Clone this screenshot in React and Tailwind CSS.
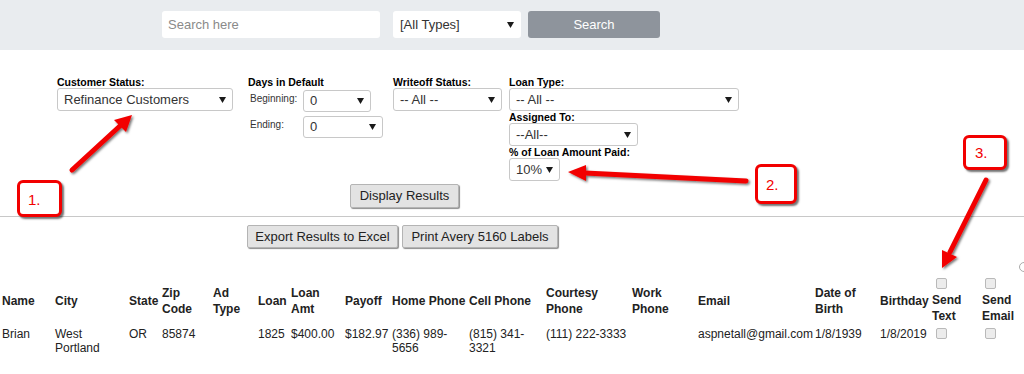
import React from 'react'

const cols = [53, 74, 33, 51, 45, 33, 54, 47, 77, 77, 86, 66, 117, 65, 52, 50, 44]

function Caret() {
  return (
    <svg width="7" height="6" viewBox="0 0 7 6" className="shrink-0">
      <polygon points="0,0 7,0 3.5,6" fill="#1a1a1a" />
    </svg>
  )
}

function Sel({ text, className }) {
  return (
    <div className={`flex items-center justify-between bg-white border border-[#c8c8c8] rounded-[3px] pl-[6px] pr-[6px] text-[13px] text-[#333] ${className}`}>
      <span className="whitespace-nowrap">{text}</span>
      <Caret />
    </div>
  )
}

function Btn({ children, className }) {
  return (
    <div className={`flex items-center justify-center bg-[#e3e3e3] border border-[#b4b4b4] rounded-[2px] shadow-[1px_1px_1px_rgba(0,0,0,0.45)] text-[13px] text-[#222] whitespace-nowrap ${className}`}>
      {children}
    </div>
  )
}

function Box() {
  return <div className="w-[11px] h-[11px] rounded-[2px] border border-[#b9b9b9] bg-[#ececec]" />
}

function Label({ children }) {
  return <div className="text-[10.5px] font-bold leading-[12px] h-[12px] text-black whitespace-nowrap">{children}</div>
}

export default function App() {
  return (
    <div className="relative w-[1024px] h-[374px] overflow-hidden bg-white font-['Liberation_Sans',Arial,sans-serif]">
      {/* top search bar */}
      <div className="h-[50px] bg-[#e9ecef] flex items-start pt-[11px] pl-[162px]">
        <div className="w-[218px] h-[27px] bg-white rounded-[3px] flex items-center pl-[6px] text-[13px] text-[#8a8a8a]">Search here</div>
        <div className="ml-[13px] w-[128px] h-[27px] bg-white rounded-[3px] flex items-center justify-between pl-[7px] pr-[7px] text-[13px] text-[#333]">
          <span>[All Types]</span>
          <Caret />
        </div>
        <div className="ml-[7px] w-[132px] h-[27px] bg-[#8e949c] rounded-[3px] flex items-center justify-center text-[13px] text-white">Search</div>
      </div>

      {/* filters */}
      <div className="flex pl-[57px] pt-[26px]">
        <div className="w-[191px]">
          <Label>Customer Status:</Label>
          <Sel text="Refinance Customers" className="w-[176px] h-[23px]" />
        </div>
        <div className="w-[145px]">
          <Label>Days in Default</Label>
          <div className="flex mt-[2px]">
            <div className="w-[55px] pl-[2px] pt-[1px] text-[10px] text-[#333]">Beginning:</div>
            <Sel text="0" className="w-[68px] h-[22px]" />
          </div>
          <div className="flex mt-[4px]">
            <div className="w-[55px] pl-[2px] pt-[1px] text-[10px] text-[#333]">Ending:</div>
            <Sel text="0" className="w-[80px] h-[22px]" />
          </div>
        </div>
        <div className="w-[116px]">
          <Label>Writeoff Status:</Label>
          <Sel text="-- All --" className="w-[109px] h-[23px]" />
        </div>
        <div>
          <Label>Loan Type:</Label>
          <Sel text="-- All --" className="w-[230px] h-[23px]" />
          <Label>Assigned To:</Label>
          <Sel text="--All--" className="w-[129px] h-[23px]" />
          <Label>% of Loan Amount Paid:</Label>
          <Sel text="10%" className="w-[51px] h-[23px]" />
        </div>
      </div>

      <div className="pl-[350px] mt-[3px]">
        <Btn className="w-[109px] h-[24px]">Display Results</Btn>
      </div>

      <div className="mt-[8px] border-t border-[#c8c8c8]" />

      <div className="flex gap-[4px] pl-[247px] mt-[8px]">
        <Btn className="w-[151px] h-[23px]">Export Results to Excel</Btn>
        <Btn className="w-[156px] h-[23px]">Print Avery 5160 Labels</Btn>
      </div>

      {/* results table */}
      <table className="table-fixed border-collapse mt-[30px] w-[1024px] text-[12px] text-[#222]">
        <colgroup>
          {cols.map((w, i) => (
            <col key={i} style={{ width: w }} />
          ))}
        </colgroup>
        <thead>
          <tr className="text-left align-middle font-bold leading-[16px]">
            <th className="pl-[2px] py-[1px]">Name</th>
            <th className="pl-[2px]">City</th>
            <th className="pl-[2px]">State</th>
            <th className="pl-[2px]">Zip<br />Code</th>
            <th className="pl-[2px]">Ad<br />Type</th>
            <th className="pl-[2px]">Loan</th>
            <th className="pl-[2px]">Loan<br />Amt</th>
            <th className="pl-[2px]">Payoff</th>
            <th className="pl-[2px] whitespace-nowrap">Home Phone</th>
            <th className="pl-[2px] whitespace-nowrap">Cell Phone</th>
            <th className="pl-[2px]">Courtesy<br />Phone</th>
            <th className="pl-[2px]">Work<br />Phone</th>
            <th className="pl-[2px]">Email</th>
            <th className="pl-[2px]">Date of<br />Birth</th>
            <th className="pl-[2px]">Birthday</th>
            <th className="pl-[2px]">
              <div className="pl-[4px] mb-[3px]"><Box /></div>
              Send<br />Text
            </th>
            <th className="pl-[2px]">
              <div className="pl-[3px] mb-[3px]"><Box /></div>
              Send<br />Email
            </th>
          </tr>
        </thead>
        <tbody>
          <tr className="align-top leading-[14px]">
            <td className="pl-[2px] pt-[3px]">Brian</td>
            <td className="pl-[2px] pt-[3px]">West<br />Portland</td>
            <td className="pl-[2px] pt-[3px]">OR</td>
            <td className="pl-[2px] pt-[3px]">85874</td>
            <td className="pl-[2px] pt-[3px]"></td>
            <td className="pl-[2px] pt-[3px]">1825</td>
            <td className="pl-[2px] pt-[3px]">$400.00</td>
            <td className="pl-[2px] pt-[3px] whitespace-nowrap">$182.97</td>
            <td className="pl-[2px] pt-[3px]">(336) 989-<br />5656</td>
            <td className="pl-[2px] pt-[3px]">(815) 341-<br />3321</td>
            <td className="pl-[2px] pt-[3px] whitespace-nowrap">(111) 222-3333</td>
            <td className="pl-[2px] pt-[3px]"></td>
            <td className="pl-[2px] pt-[3px]">aspnetall@gmail.com</td>
            <td className="pl-[2px] pt-[3px]">1/8/1939</td>
            <td className="pl-[2px] pt-[3px]">1/8/2019</td>
            <td className="pl-[6px] pt-[4px]"><Box /></td>
            <td className="pl-[5px] pt-[4px]"><Box /></td>
          </tr>
        </tbody>
      </table>

      {/* partly visible control at the right edge */}
      <div className="absolute left-[1019px] top-[262px] w-[10px] h-[10px] rounded-full border border-[#aaa]" />

      {/* annotation boxes */}
      <div className="absolute left-[17px] top-[180px] w-[45px] h-[37px] bg-white border-[3px] border-[#f20000] rounded-[6px] shadow-[2px_2px_2px_rgba(0,0,0,0.55)] pl-[8px] pt-[9px] text-[15px] leading-[16px] text-[#f20000]">1.</div>
      <div className="absolute left-[755px] top-[164px] w-[42px] h-[40px] bg-white border-[3px] border-[#f20000] rounded-[6px] shadow-[2px_2px_2px_rgba(0,0,0,0.55)] pl-[8px] pt-[10px] text-[15px] leading-[16px] text-[#f20000]">2.</div>
      <div className="absolute left-[963px] top-[135px] w-[44px] h-[35px] bg-white border-[3px] border-[#f20000] rounded-[6px] shadow-[2px_2px_2px_rgba(0,0,0,0.55)] pl-[9px] pt-[7px] text-[15px] leading-[16px] text-[#f20000]">3.</div>

      {/* annotation arrows */}
      <svg className="absolute left-0 top-0 pointer-events-none" width="1024" height="374">
        <defs>
          <filter id="sh" x="-20%" y="-20%" width="140%" height="140%">
            <feDropShadow dx="1.5" dy="1.5" stdDeviation="1" floodColor="#000" floodOpacity="0.55" />
          </filter>
        </defs>
        <g filter="url(#sh)" fill="#f20000" stroke="#f20000" strokeLinecap="round">
          <line x1="72" y1="170" x2="121" y2="125" strokeWidth="5" />
          <polygon points="132,115 126,132 114,120" stroke="none" />
          <line x1="746" y1="181" x2="585" y2="173" strokeWidth="5" />
          <polygon points="568,172 586,165 586,181" stroke="none" />
          <line x1="986" y1="180" x2="950" y2="252" strokeWidth="5" />
          <polygon points="942,268 957,257 942,250" stroke="none" />
        </g>
      </svg>
    </div>
  )
}
